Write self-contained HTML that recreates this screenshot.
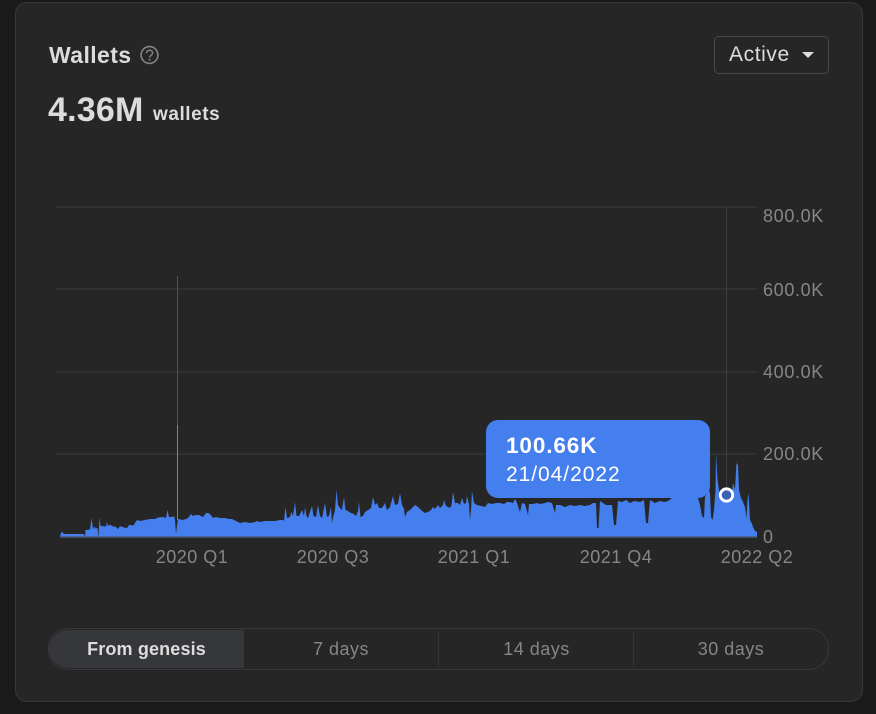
<!DOCTYPE html>
<html>
<head>
<meta charset="utf-8">
<style>
html,body{margin:0;padding:0;width:876px;height:714px;overflow:hidden;background:#1a1a1a;font-family:"Liberation Sans",sans-serif}
.card{position:absolute;left:15px;top:2px;width:846px;height:698px;background:#262626;border:1px solid #383838;border-radius:12px}
.t{position:absolute;white-space:nowrap}
.title{left:49px;top:42px;font-size:23px;line-height:26px;font-weight:bold;color:#dcdcdc;letter-spacing:.4px}
.big{left:48px;top:91px;font-size:34px;line-height:38px;font-weight:bold;color:#dcdcdc;letter-spacing:.2px}
.unit{left:153px;top:104px;font-size:19px;line-height:22px;font-weight:bold;color:#dcdcdc;letter-spacing:.55px}
.drop{position:absolute;left:714px;top:36px;width:113px;height:36px;border:1px solid #4a4a4a;border-radius:5px}
.drop span{position:absolute;left:14px;top:6px;font-size:21px;line-height:24px;color:#dcdcdc;letter-spacing:.6px}
.drop i{position:absolute;left:87px;top:15px;width:0;height:0;border-left:6.5px solid transparent;border-right:6.5px solid transparent;border-top:6.5px solid #dcdcdc}
.y{left:763px;font-size:18px;line-height:20px;color:#868686;letter-spacing:.65px}
.x{font-size:18px;line-height:20px;color:#868686;letter-spacing:.5px;transform:translateX(-50%)}
.tip{position:absolute;left:486px;top:420px;width:224px;height:78px;background:#457eed;border-radius:12px}
.tip b{position:absolute;left:20px;top:14px;font-size:22.5px;line-height:24px;color:#fff;letter-spacing:.9px}
.tip span{position:absolute;left:20px;top:43px;font-size:21px;line-height:24px;color:#fff;letter-spacing:.95px}
.seg{position:absolute;left:48px;top:628px;width:779px;height:40px;border:1px solid #383838;border-radius:20px;overflow:hidden}
.seg div{position:absolute;top:0;height:40px;text-align:center;font-size:18px;line-height:41px;color:#868686;letter-spacing:.5px}
.seg .a{left:0;top:1px;width:195px;height:38px;line-height:39px;background:#36373a;color:#dcdcdc;font-weight:bold;letter-spacing:.15px;border-radius:19px 0 0 19px}
.seg .d{height:36px;top:2px;width:1px;background:#363636}
svg{position:absolute;left:0;top:0}
</style>
</head>
<body>
<div class="card"></div>
<div class="t title">Wallets</div>
<svg width="876" height="714" viewBox="0 0 876 714">
<circle cx="149.5" cy="55" r="8.4" fill="none" stroke="#858585" stroke-width="1.6"/>
<path d="M146.6 53.2c0-1.8 1.3-2.9 3-2.9s3 1.1 3 2.7c0 2.3-3 2.3-3 4.6" fill="none" stroke="#858585" stroke-width="1.5"/>
<circle cx="149.6" cy="59.8" r="1" fill="#858585"/>
<g stroke="#353535" stroke-width="1.6" fill="none">
<path d="M56 207H757M56 289H757M56 372H757M56 454H757"/>
</g>
<path d="M726.5 207V537" stroke="#3e3e3e" stroke-width="1"/>
<path d="M177.5 276V425" stroke="#505050" stroke-width="1"/>
<path d="M177.5 425V520" stroke="#5f86cf" stroke-width="1"/>
<path fill="#457eed" d="M60 537L61 533L62 531.5L64 534L84 534L85 537L85.5 530L90 529.5L91.5 518L93 529L94.5 526.5L95.5 528.5L97.5 528L98.5 537L99.5 517L100.5 526L106 526.5L107 522L108 526L110 524.5L112 526L116 527L118 529L120 526L124 527.5L127 528L129 525L132 525L133 526L135 523L137 520L140 521L145 520L150 519L155 519L158 517.5L163 517L166 518L167.5 510L169 517L172 517L174 516L175 520L176 534L177 525L178 519L183 520L186 519L188 518L191 514L193 516L195 515L199 515L203 517L206 513L208 513L210 514L213 518L216 517L220 518L225 518L229 519L232 519L236 521L240 523L245 522L250 523L255 522L257 521L260 522L265 521L270 521L275 521L280 520L283 520L284 521L285.5 507L287 518L290 517L291.5 512L293 516L295 502L296.5 516L299 516L302 510L304 516L305 507L306.5 516L308 518L310 512L312 506L313.5 516L316 517L318 505L320 516L322 518L325 503L327 517L329 516L331 507L332 523L333 518L335 510L336.5 490L338 505L340 508L342 510L344 497L345.5 510L348 511L351 513L354 514L356 516L358 511L359 502L360.5 517L363 516L365 512L368 510L371 508L373 497L375 505L377 503L379 508L382 508L385 503L387 510L390 507L393 496L395 505L398 504L400 493L402 505L404 509L405 517L407 512L410 510L413 507L415 505L418 507L421 510L425 513L428 512L431 510L433 507L435 509L438 505L440 508L443 505L444 500L446 506L450 508L451.5 505L453 492L455 503L458 503L460 505L462 498L464 504L466 503L467 496L469 504L470 520L471 510L472 491L474 503L477 505L481 506L485 507L488 503L492 504L496 503L500 503L504 504L507 502L510 502L513 503L515 499L517 503L520 512L522 503L525 504L528 515L529 504L533 504L537 503L540 504L545 503L548 502L552 503L555 513L556 505L560 505L565 507L570 505L575 506L580 505L585 506L590 505L593 503L596 503L597 528L598.5 528L600 501L603 503L606 505L610 505L612 505L614 525L616 525L618 501L622 502L626 500L630 503L634 501L640 502L644 500L646 523L648 523L650 500L655 503L660 501L664 502L668 501L672 498L680 498L690 498L698 498L700 505L702 516L704 518L705 497L709 490L710 494L711 517L712.5 520L714 510L715.5 490L716 453L717.5 480L719 490L720.5 500L723 499L728 501L731 500L733 483L735 490L736.5 463L738 465L739 490L741 498L743 502L745 507L746.5 518L747.5 500L748.5 493L750 520L752 524L753 527L755 531L757 532L757 537Z"/>
<path d="M60 537H757" stroke="#4b5a78" stroke-width="1.6"/>
<circle cx="726.5" cy="495" r="6.2" fill="#3b63b3" stroke="#fff" stroke-width="2.8"/>
</svg>
<div class="t big">4.36M</div>
<div class="t unit">wallets</div>
<div class="drop"><span>Active</span><i></i></div>
<div class="t y" style="top:206px">800.0K</div>
<div class="t y" style="top:280px">600.0K</div>
<div class="t y" style="top:362px">400.0K</div>
<div class="t y" style="top:444px">200.0K</div>
<div class="t y" style="top:527px">0</div>
<div class="t x" style="left:192px;top:547px">2020 Q1</div>
<div class="t x" style="left:333px;top:547px">2020 Q3</div>
<div class="t x" style="left:474px;top:547px">2021 Q1</div>
<div class="t x" style="left:616px;top:547px">2021 Q4</div>
<div class="t x" style="left:757px;top:547px">2022 Q2</div>
<div class="tip"><b>100.66K</b><span>21/04/2022</span></div>
<div class="seg">
<div class="a">From genesis</div>
<div style="left:195px;width:194px">7 days</div>
<div class="d" style="left:389px"></div>
<div style="left:390px;width:195px">14 days</div>
<div class="d" style="left:584px"></div>
<div style="left:585px;width:194px">30 days</div>
</div>
</body>
</html>
